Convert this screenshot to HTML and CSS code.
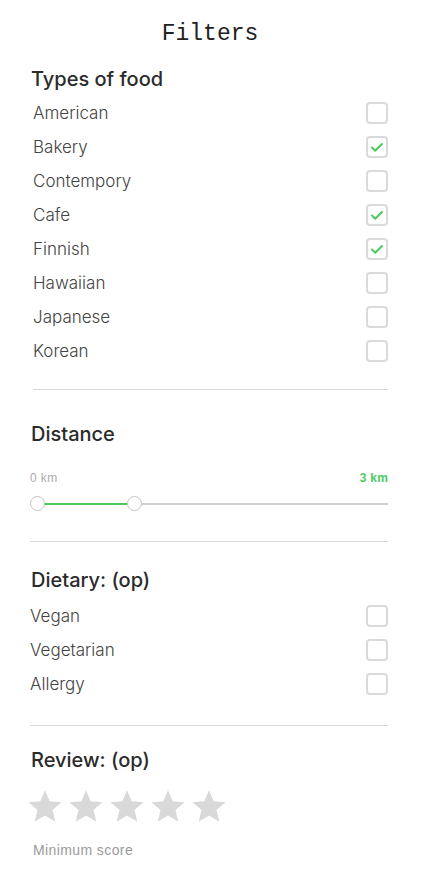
FILE: index.html
```html
<!DOCTYPE html>
<html>
<head>
<meta charset="utf-8">
<link rel="stylesheet" href="styles.css">
</head>
<body>
<div class="page">
  <h1 class="title">Filters</h1>

  <section class="section food">
    <h2 class="heading">Types of food</h2>
    <ul class="options indent">
      <li class="option"><span>American</span><span class="box"></span></li>
      <li class="option"><span>Bakery</span><span class="box checked"><svg viewBox="0 0 22 22"><path d="M6 11.5l3.2 3.2L16 8" /></svg></span></li>
      <li class="option"><span>Contempory</span><span class="box"></span></li>
      <li class="option"><span>Cafe</span><span class="box checked"><svg viewBox="0 0 22 22"><path d="M6 11.5l3.2 3.2L16 8" /></svg></span></li>
      <li class="option"><span>Finnish</span><span class="box checked"><svg viewBox="0 0 22 22"><path d="M6 11.5l3.2 3.2L16 8" /></svg></span></li>
      <li class="option"><span>Hawaiian</span><span class="box"></span></li>
      <li class="option"><span>Japanese</span><span class="box"></span></li>
      <li class="option"><span>Korean</span><span class="box"></span></li>
    </ul>
    <hr class="divider">
  </section>

  <section class="section distance">
    <h2 class="heading">Distance</h2>
    <div class="range-labels"><span class="min">0 km</span><span class="max">3 km</span></div>
    <div class="slider">
      <div class="fill" style="width: 97px"></div>
      <span class="thumb thumb-a"></span>
      <span class="thumb thumb-b" style="left: 97px"></span>
    </div>
    <hr class="divider">
  </section>

  <section class="section dietary">
    <h2 class="heading">Dietary: (op)</h2>
    <ul class="options">
      <li class="option"><span>Vegan</span><span class="box"></span></li>
      <li class="option"><span>Vegetarian</span><span class="box"></span></li>
      <li class="option"><span>Allergy</span><span class="box"></span></li>
    </ul>
    <hr class="divider">
  </section>

  <section class="section review">
    <h2 class="heading">Review: (op)</h2>
    <div class="stars">
      <svg viewBox="0 0 24 24"><path d="M12 1.5l3.1 7.4 7.9.6-6 5.2 1.9 7.8L12 18.3l-6.9 4.2 1.9-7.8-6-5.2 7.9-.6z"/></svg>
      <svg viewBox="0 0 24 24"><path d="M12 1.5l3.1 7.4 7.9.6-6 5.2 1.9 7.8L12 18.3l-6.9 4.2 1.9-7.8-6-5.2 7.9-.6z"/></svg>
      <svg viewBox="0 0 24 24"><path d="M12 1.5l3.1 7.4 7.9.6-6 5.2 1.9 7.8L12 18.3l-6.9 4.2 1.9-7.8-6-5.2 7.9-.6z"/></svg>
      <svg viewBox="0 0 24 24"><path d="M12 1.5l3.1 7.4 7.9.6-6 5.2 1.9 7.8L12 18.3l-6.9 4.2 1.9-7.8-6-5.2 7.9-.6z"/></svg>
      <svg viewBox="0 0 24 24"><path d="M12 1.5l3.1 7.4 7.9.6-6 5.2 1.9 7.8L12 18.3l-6.9 4.2 1.9-7.8-6-5.2 7.9-.6z"/></svg>
    </div>
    <p class="caption">Minimum score</p>
  </section>
</div>
</body>
</html>
```

FILE: styles.css
```css
* { box-sizing: border-box; }
html, body { margin: 0; padding: 0; background: #fff; }
body { font-family: "Inter", sans-serif; color: #333; }

.page {
  width: 425px;
  padding: 20px 37px 0 30px;
}

.title {
  margin: 0;
  font-family: "Liberation Mono", "DejaVu Sans Mono", monospace;
  font-weight: 400;
  font-size: 23px;
  line-height: 28px;
  text-align: center;
  color: #222;
  padding-left: 2px;
}

.heading {
  margin: 0;
  font-family: "Inter", sans-serif;
  font-weight: 500;
  font-size: 20px;
  line-height: 26px;
  color: #2b2b2b;
  padding-left: 1px;
}

.food .heading { margin-top: 18px; }

.options {
  list-style: none;
  margin: 0;
  padding: 0;
}
.options.indent { padding-left: 3px; margin-top: 4px; }

.option {
  display: flex;
  justify-content: space-between;
  align-items: center;
  height: 34px;
  font-family: "Inter", sans-serif;
  font-weight: 300;
  font-size: 17px;
  color: #444;
}

.box {
  width: 22px;
  height: 22px;
  border: 2px solid #dadada;
  border-radius: 4px;
  display: flex;
  align-items: center;
  justify-content: center;
}
.box svg { width: 22px; height: 22px; flex: none; }
.box svg path { fill: none; stroke: #4cca5e; stroke-width: 2; stroke-linecap: round; stroke-linejoin: round; }

.divider {
  border: 0;
  border-top: 1px solid #d6d6d6;
  margin: 0;
}
.food .divider { margin-top: 21px; margin-left: 3px; }

.distance .heading { margin-top: 31px; }
.range-labels {
  display: flex;
  justify-content: space-between;
  margin-top: 24px;
  font-family: "Liberation Sans", sans-serif;
  font-size: 12px;
  line-height: 14px;
  letter-spacing: 0.4px;
}
.range-labels .min { color: #aaa; }
.range-labels .max { color: #4cca5e; font-weight: 700; letter-spacing: 0.2px; }

.slider {
  position: relative;
  height: 2px;
  background: #d0d0d0;
  margin-top: 18px;
  margin-left: 7px;
}
.fill { height: 2px; background: #4cca5e; }
.thumb {
  position: absolute;
  top: -7px;
  left: 0;
  width: 15px;
  height: 15px;
  margin-left: -7px;
  border-radius: 50%;
  background: #fff;
  border: 1px solid #c4c4c4;
}
.distance .divider { margin-top: 36px; }

.dietary .heading { margin-top: 25px; }
.dietary .options { margin-top: 6px; }
.dietary .divider { margin-top: 24px; }

.review .heading { margin-top: 21px; }
.stars { display: flex; gap: 5px; margin-top: 15px; margin-left: -3px; }
.stars svg { width: 36px; height: 36px; }
.stars path { fill: #d9d9d9; }
.caption {
  margin: 18px 0 0 3px;
  font-family: "Liberation Sans", sans-serif;
  font-size: 14px;
  color: #9a9a9a;
  letter-spacing: 0.4px;
}
```
